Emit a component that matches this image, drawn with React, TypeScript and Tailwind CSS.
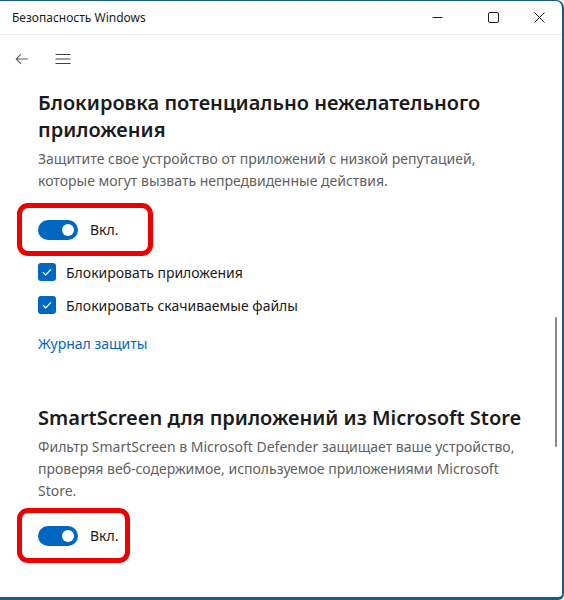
import { useState } from 'react'

function Toggle({ on }: { on: boolean }) {
  return (
    <div className={`w-[40px] h-[20px] rounded-full flex items-center px-[4px] ${on ? 'bg-[#0067c0] justify-end' : 'bg-white border border-gray-500 justify-start'}`}>
      <div className="w-[12px] h-[12px] rounded-full bg-white" />
    </div>
  )
}

function Check({ label }: { label: string }) {
  return (
    <div className="flex items-center gap-[10px] h-[20px]">
      <div className="w-[18px] h-[18px] rounded-[3px] bg-[#0067c0] flex items-center justify-center">
        <svg width="10" height="8" viewBox="0 0 10 8" fill="none">
          <path d="M1 4.2 L3.7 6.8 L9 1.3" stroke="white" strokeWidth="1.2" />
        </svg>
      </div>
      <span className="text-[14px] text-[#1b1b1b]">{label}</span>
    </div>
  )
}

function RedBox({ children, w }: { children: React.ReactNode; w: string }) {
  return (
    <div className={`ml-[17px] ${w} border-[5px] border-[#ee0000] rounded-[11px] flex items-center gap-[12px] pl-[16px]`}>
      {children}
    </div>
  )
}

export default function App() {
  const [a] = useState(true)
  return (
    <div className="w-[564px] h-[600px] bg-[#f3f3f3]" style={{ fontFamily: '"Noto Sans", "Open Sans", sans-serif' }}>
      <div className="w-[564px] h-[600px] bg-white border-t border-r-[2px] border-b-[3px] border-[#1b5d80] rounded-tr-[8px] rounded-br-[6px] flex flex-col overflow-hidden relative">
        <div className="h-[34px] flex items-center justify-between border-b border-[#ececec] shrink-0">
          <span className="pl-[12px] text-[12px] text-[#1b1b1b]">Безопасность Windows</span>
          <div className="flex items-center h-full">
            <div className="w-[46px] h-full flex items-center justify-center">
              <svg width="11" height="11" viewBox="0 0 11 11"><path d="M0.5 5.5 H10.5" stroke="#1b1b1b" strokeWidth="1" /></svg>
            </div>
            <div className="w-[46px] h-full flex items-center justify-center ml-[10px]">
              <svg width="11" height="11" viewBox="0 0 11 11"><rect x="0.5" y="0.5" width="10" height="10" rx="1.5" fill="none" stroke="#1b1b1b" strokeWidth="1" /></svg>
            </div>
            <div className="w-[46px] h-full flex items-center justify-center">
              <svg width="11" height="11" viewBox="0 0 11 11"><path d="M0.5 0.5 L10.5 10.5 M10.5 0.5 L0.5 10.5" stroke="#1b1b1b" strokeWidth="1" /></svg>
            </div>
          </div>
        </div>

        <div className="h-[48px] flex items-center gap-[26px] pl-[15px] shrink-0">
          <svg width="14" height="12" viewBox="0 0 14 12" fill="none">
            <path d="M13 6 H1.5 M6 1.2 L1.2 6 L6 10.8" stroke="#606060" strokeWidth="1.1" />
          </svg>
          <svg width="16" height="12" viewBox="0 0 16 12" fill="none">
            <path d="M0.5 1.5 H15.5 M0.5 6 H15.5 M0.5 10.5 H15.5" stroke="#404040" strokeWidth="1.1" />
          </svg>
        </div>

        <div className="flex-1 flex">
          <div className="flex-1 flex flex-col">
            <div className="pl-[38px] pt-[6px] pr-[40px]">
              <h2 className="text-[20px] leading-[27px] font-semibold text-[#1b1b1b]">
                Блокировка потенциально нежелательного приложения
              </h2>
              <p className="mt-[5px] text-[14px] leading-[22px] text-[#616161]">
                Защитите свое устройство от приложений с низкой репутацией, которые могут вызвать непредвиденные действия.
              </p>
            </div>

            <div className="mt-[11px]">
              <RedBox w="w-[136px] h-[53px]">
                <Toggle on={a} />
                <span className="text-[14px] text-[#1b1b1b]">Вкл.</span>
              </RedBox>
            </div>

            <div className="pl-[38px] mt-[6px] flex flex-col gap-[13px]">
              <Check label="Блокировать приложения" />
              <Check label="Блокировать скачиваемые файлы" />
            </div>

            <div className="pl-[38px] mt-[16px]">
              <span className="text-[14px] text-[#0067c0]">Журнал защиты</span>
            </div>

            <div className="pl-[38px] pr-[30px] mt-[49px]">
              <h2 className="text-[20px] leading-[28px] font-semibold text-[#1b1b1b]">
                SmartScreen для приложений из Microsoft Store
              </h2>
              <p className="mt-[4px] text-[14px] leading-[22px] text-[#616161]">
                Фильтр SmartScreen в Microsoft Defender защищает ваше устройство, проверяя веб-содержимое, используемое приложениями Microsoft Store.
              </p>
            </div>

            <div className="mt-[6px]">
              <RedBox w="w-[113px] h-[55px]">
                <Toggle on={a} />
                <span className="text-[14px] text-[#1b1b1b]">Вкл.</span>
              </RedBox>
            </div>
          </div>
          <div className="w-[10px] flex flex-col pt-[234px]">
            <div className="w-[2px] h-[130px] bg-[#8a8a8a] rounded-full ml-[3px]" />
          </div>
        </div>
      </div>
    </div>
  )
}
